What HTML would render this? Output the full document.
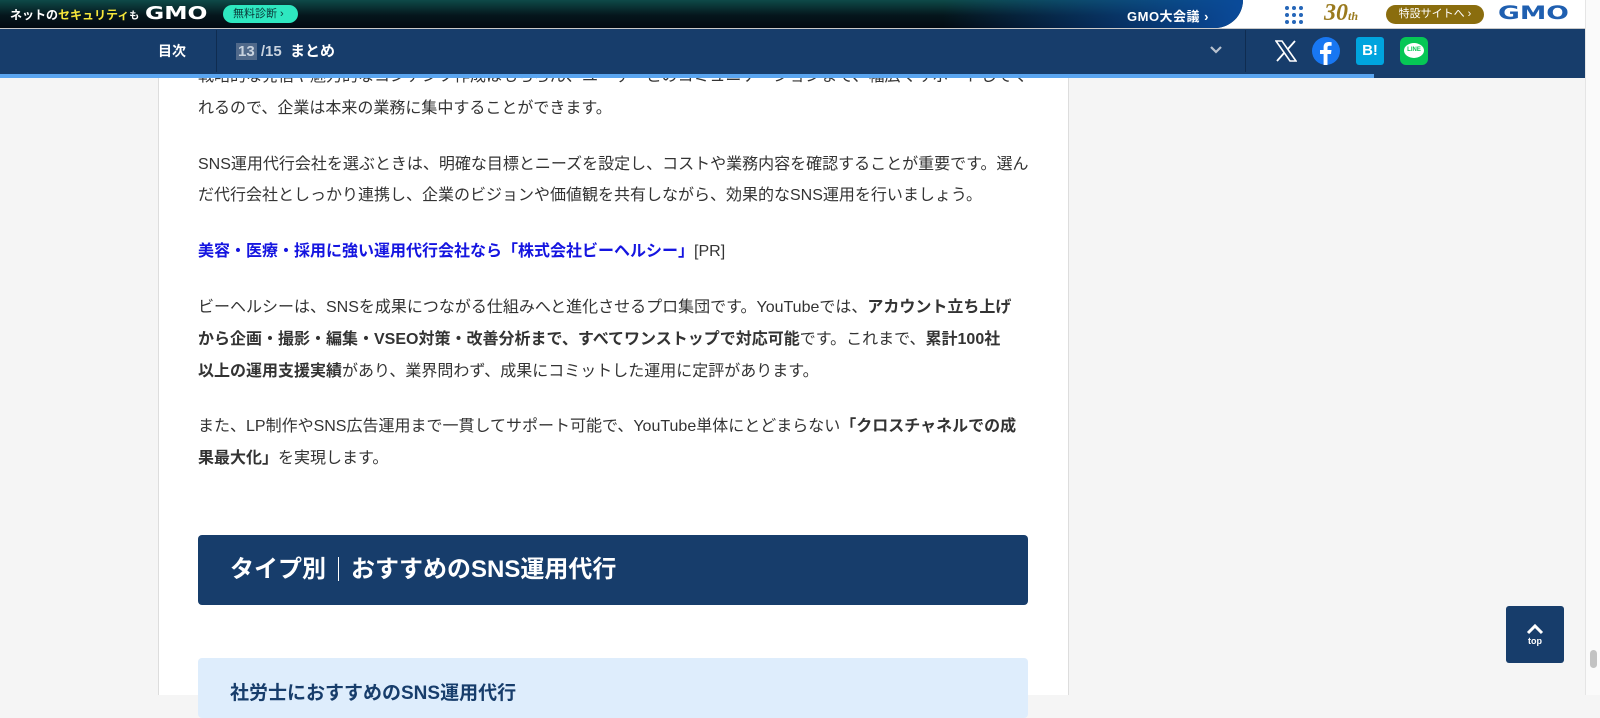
<!DOCTYPE html>
<html><head><meta charset="utf-8"><style>
*{margin:0;padding:0;box-sizing:border-box}
body{width:1600px;height:695px;overflow:hidden;background:#f5f5f5;font-family:"Liberation Sans","Noto Sans CJK JP",sans-serif;position:relative;color:#333}
.col{position:absolute;left:158px;top:0;width:911px;height:695px;background:#fff;border-left:1px solid #ddd;border-right:1px solid #ddd}
.content{position:absolute;left:198px;top:61px;width:840px;font-size:16px;line-height:31.8px;white-space:nowrap}
.content p{margin-bottom:24px}
.content b{font-weight:bold}
.content a{color:#1515e0;font-weight:bold;text-decoration:none}
.h2{position:absolute;left:198px;top:535px;width:830px;height:70px;background:#173d6b;border-radius:4px;color:#fff;font-size:24px;font-weight:bold;line-height:70px;padding-left:32px}
.h2 span{display:inline-block;width:1px;height:24px;background:#fff;vertical-align:-4px;margin:0 12px}
.box{position:absolute;left:198px;top:658px;width:830px;height:60px;background:#deedfc;border-radius:4px;color:#173d6b;font-size:19px;font-weight:bold;padding:20px 0 0 32px}
.top{position:absolute;top:0;left:0;width:1585px;height:28px;background:#fff}
.topdark{position:absolute;top:0;left:0;width:1243px;height:28px;background:linear-gradient(180deg,#0e4a48 0%,#05161c 55%,#020a12 100%);border-bottom-right-radius:28px 28px}
.topdark:after{content:"";position:absolute;right:0;top:0;width:300px;height:28px;background:linear-gradient(90deg,rgba(0,40,90,0),#0a4a9a);border-bottom-right-radius:28px}
.hdr{position:absolute;top:28px;left:0;width:1585px;height:46px;background:#173d6b;border-top:1px solid #c9c9c9}
.prog{position:absolute;top:74px;left:0;width:1585px;height:4px;background:#173d6b}
.prog div{width:1374px;height:4px;background:#5aa5f0}
.sb{position:absolute;left:1585px;top:0;width:15px;height:695px;background:#fafafa;border-left:1px solid #e5e5e5}
.sb div{position:absolute;left:4px;top:650px;width:7px;height:18px;background:#c2c2c2;border-radius:4px}
.t{position:absolute;color:#fff;font-weight:bold}
.gotop{position:absolute;left:1506px;top:606px;width:58px;height:57px;background:#173d6b;border-radius:3px}
</style></head><body>
<div class="col"></div>
<div class="content">
<p>戦略的な発信や魅力的なコンテンツ作成はもちろん、ユーザーとのコミュニケーションまで、幅広くサポートしてく<br>れるので、企業は本来の業務に集中することができます。</p>
<p>SNS運用代行会社を選ぶときは、明確な目標とニーズを設定し、コストや業務内容を確認することが重要です。選ん<br>だ代行会社としっかり連携し、企業のビジョンや価値観を共有しながら、効果的なSNS運用を行いましょう。</p>
<p><a>美容・医療・採用に強い運用代行会社なら「株式会社ビーヘルシー」</a>[PR]</p>
<p>ビーヘルシーは、SNSを成果につながる仕組みへと進化させるプロ集団です。YouTubeでは、<b>アカウント立ち上げ<br>から企画・撮影・編集・VSEO対策・改善分析まで、すべてワンストップで対応可能</b>です。これまで、<b>累計100社<br>以上の運用支援実績</b>があり、業界問わず、成果にコミットした運用に定評があります。</p>
<p>また、LP制作やSNS広告運用まで一貫してサポート可能で、YouTube単体にとどまらない<b>「クロスチャネルでの成<br>果最大化」</b>を実現します。</p>
</div>
<div class="h2">タイプ別<span></span>おすすめのSNS運用代行</div>
<div class="box">社労士におすすめのSNS運用代行</div>

<div class="top"></div>
<div class="topdark"></div>
<div class="t" style="left:10px;top:6px;font-size:12px">ネットの<span style="color:#f5e63a">セキュリティ</span><span style="font-size:10px">も</span></div>
<div class="t" style="left:145px;top:3px;font-size:18px;font-family:'DejaVu Sans',sans-serif;transform:scaleX(1.3);transform-origin:left">GMO</div>
<div style="position:absolute;left:223px;top:5px;width:75px;height:18px;background:#2ee8c0;border-radius:9px;font-size:11px;color:#0b3a3a;line-height:18px;padding-left:10px">無料診断 ›</div>
<div class="t" style="left:1127px;top:6px;font-size:13px;letter-spacing:0.5px">GMO大会議 ›</div>
<svg style="position:absolute;left:1284px;top:5px" width="20" height="20"><g fill="#2566b8"><circle cx="3" cy="3" r="2"/><circle cx="10" cy="3" r="2"/><circle cx="17" cy="3" r="2"/><circle cx="3" cy="10" r="2"/><circle cx="10" cy="10" r="2"/><circle cx="17" cy="10" r="2"/><circle cx="3" cy="17" r="2"/><circle cx="10" cy="17" r="2"/><circle cx="17" cy="17" r="2"/></g></svg>
<div style="position:absolute;left:1324px;top:0px;font:italic bold 24px 'Liberation Serif',serif;color:#9a7a1e">30<span style="font-size:12px">th</span></div>
<div style="position:absolute;left:1386px;top:5px;width:98px;height:19px;background:#8a6d0e;border-radius:10px;color:#fff;font-size:11px;line-height:19px;text-align:center">特設サイトへ ›</div>
<div style="position:absolute;left:1498px;top:2px;font:bold 19px 'DejaVu Sans',sans-serif;color:#1f5fb0;transform:scaleX(1.4);transform-origin:left">GMO</div>

<div class="hdr"></div>
<div class="t" style="left:158px;top:41px;font-size:14px">目次</div>
<div style="position:absolute;left:216px;top:30px;width:1px;height:42px;background:#0f2c50"></div>
<div class="t" style="left:236px;top:40px;font-size:15px"><span style="background:#50698a;padding:0 2px;color:#c9d3df">13</span> <span style="color:#c9d3df">/15</span>&nbsp; まとめ</div>
<svg style="position:absolute;left:1209px;top:45px" width="14" height="10"><path d="M2 2l5 5 5-5" stroke="#b8c2cf" stroke-width="2.2" fill="none"/></svg>
<div style="position:absolute;left:1245px;top:30px;width:1px;height:42px;background:#0f2c50"></div>
<svg style="position:absolute;left:1275px;top:40px" width="22" height="22"><path d="M1 1h6l14 20h-6z" fill="none" stroke="#fff" stroke-width="1.6"/><path d="M20 1L12.5 9.5M2 21l7.5-8.5" stroke="#fff" stroke-width="1.8"/></svg>
<svg style="position:absolute;left:1312px;top:37px" width="28" height="28"><circle cx="14" cy="14" r="14" fill="#1877f2"/><path d="M15.5 28V17h3.5l.5-4h-4v-2.3c0-1.2.4-2 2-2h2.1V5.2c-.4 0-1.6-.2-3-.2-3 0-5 1.8-5 5.1V13H8v4h3.6v11z" fill="#fff"/></svg>
<div style="position:absolute;left:1356px;top:37px;width:28px;height:28px;background:#00a4de;border-radius:3px;color:#fff;font:bold 15px 'Liberation Sans',sans-serif;line-height:28px;text-align:center">B!</div>
<div style="position:absolute;left:1400px;top:37px;width:28px;height:28px;background:#06c755;border-radius:6px"><div style="position:absolute;left:4px;top:6px;width:20px;height:15px;background:#fff;border-radius:50%;color:#06c755;font:bold 6px sans-serif;text-align:center;line-height:15px">LINE</div></div>
<div class="prog"><div></div></div>

<div class="gotop"><svg style="position:absolute;left:20px;top:17px" width="18" height="12"><path d="M2 10l7-7 7 7" stroke="#fff" stroke-width="3" fill="none"/></svg><div style="position:absolute;top:30px;width:58px;text-align:center;color:#fff;font-size:9px;font-weight:bold">top</div></div>
<div class="sb"><div></div></div>
</body></html>
